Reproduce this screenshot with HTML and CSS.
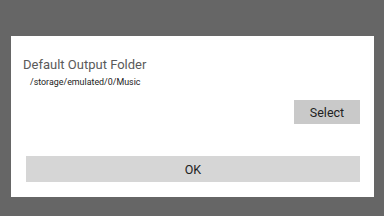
FILE: index.html
```html
<!DOCTYPE html>
<html>
<head>
<meta charset="utf-8">
<link rel="stylesheet" href="styles.css">
</head>
<body>
<div class="dialog">
  <div class="title">Default Output Folder</div>
  <div class="path">/storage/emulated/0/Music</div>
  <div class="select-row">
    <div class="btn select">Select</div>
  </div>
  <div class="btn ok">OK</div>
</div>
</body>
</html>
```
FILE: styles.css
```css
html, body {
  margin: 0;
  padding: 0;
  width: 384px;
  height: 216px;
  background: #666666;
  overflow: hidden;
  font-family: Roboto, "Noto Sans", sans-serif;
}
.dialog {
  margin: 36px 0 0 11px;
  width: 363px;
  height: 161px;
  background: #ffffff;
  box-sizing: border-box;
  padding: 21px 14px 0 12px;
  display: flex;
  flex-direction: column;
}
.title {
  font-size: 13px;
  line-height: 15px;
  color: #5a5a5a;
  height: 15px;
}
.path {
  font-size: 8.9px;
  line-height: 11px;
  color: #222222;
  margin: 5px 0 0 7px;
  height: 11px;
}
.select-row {
  display: flex;
  justify-content: flex-end;
  margin-top: 12px;
}
.btn {
  display: flex;
  align-items: center;
  justify-content: center;
  color: #222222;
  font-size: 12.5px;
}
.select {
  width: 66px;
  height: 24px;
  background: #c9c9c9;
}
.ok {
  margin: 32px 0 0 3px;
  height: 26px;
  background: #d6d6d6;
}
```
